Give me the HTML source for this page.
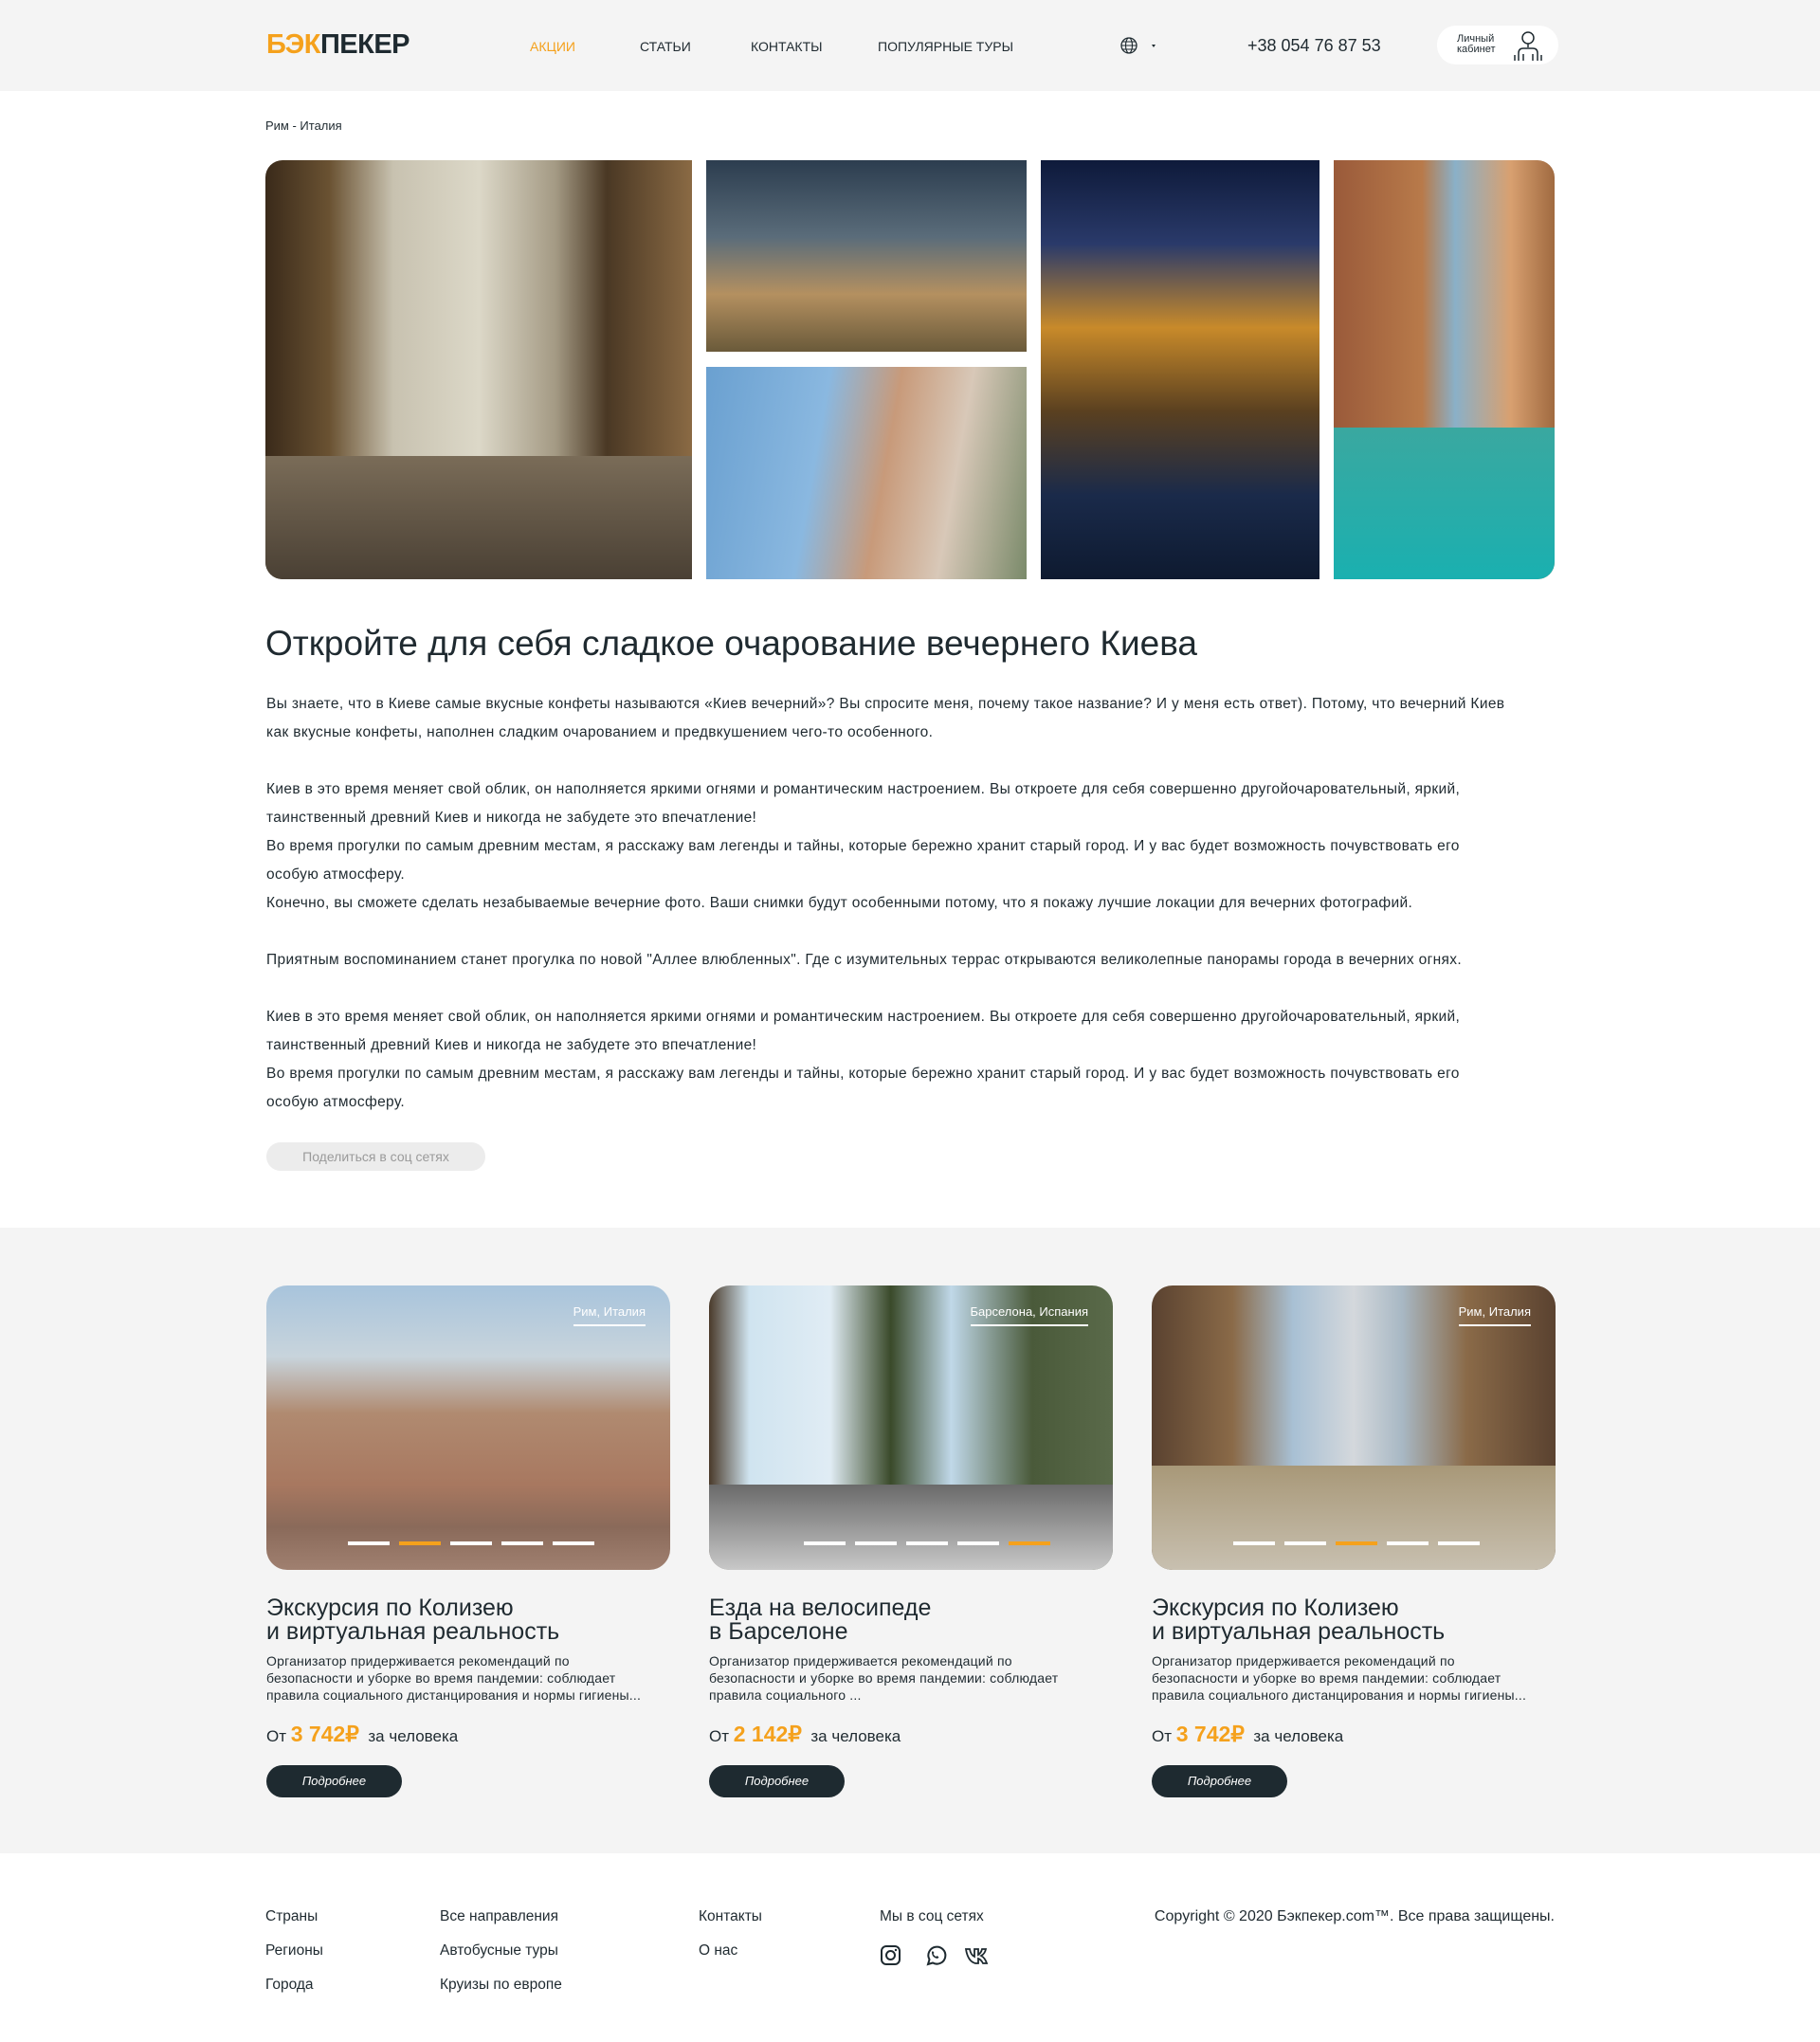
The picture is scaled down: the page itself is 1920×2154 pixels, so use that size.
<!DOCTYPE html>
<html><head><meta charset="utf-8"><style>
*{margin:0;padding:0;box-sizing:border-box}
body{width:1920px;height:2154px;background:#fff;font-family:"Liberation Sans","Noto Sans CJK SC",sans-serif;color:#1f2a30;position:relative;overflow:hidden}
.abs{position:absolute}
header{position:absolute;left:0;top:0;width:1920px;height:96px;background:#f4f4f4}
.logo{left:281px;top:31px;font-weight:bold;font-size:29px;letter-spacing:-0.5px}
.nav{top:41px;font-size:14px;color:#1f2a30}
.img{position:absolute;overflow:hidden}
p.t{font-size:15.5px;line-height:30px;color:#1f2a30;letter-spacing:0.35px}
.gray{position:absolute;left:0;top:1295px;width:1920px;height:660px;background:#f4f4f4}
.card .ph{position:absolute;width:426px;height:300px;border-radius:22px;overflow:hidden}
.tag{position:absolute;color:#fff;font-size:13px;top:20px;right:26px;border-bottom:2px solid #fff;padding-bottom:6px}
.dots{position:absolute;bottom:26px;left:86px;display:flex;gap:10px}
.dots i{display:block;width:44px;height:4px;background:#fff}
.dots i.o{background:#f5a11c}
.ct{position:absolute;font-size:25px;line-height:25px;color:#1f2a30}
.cd{position:absolute;font-size:14px;line-height:18px;width:400px;color:#1f2a30;letter-spacing:0.2px}
.pr{position:absolute;font-size:17px}
.pr b{color:#f5a11c;font-size:23px}
.btn{position:absolute;width:143px;height:34px;border-radius:17px;background:#1e2a30;color:#fff;font-size:13px;font-style:italic;text-align:center;line-height:34px}
.f{position:absolute;font-size:15.5px;color:#1f2a30}
</style></head><body>
<header>
<div class="abs logo"><span style="color:#f5a11c">БЭК</span><span style="color:#1e2a30">ПЕКЕР</span></div>
<div class="abs nav" style="left:559px;color:#f5a11c">АКЦИИ</div>
<div class="abs nav" style="left:675px">СТАТЬИ</div>
<div class="abs nav" style="left:792px">КОНТАКТЫ</div>
<div class="abs nav" style="left:926px">ПОПУЛЯРНЫЕ ТУРЫ</div>
<svg class="abs" style="left:1181px;top:37px" width="40" height="22" viewBox="0 0 40 22"><circle cx="10" cy="11" r="8" fill="none" stroke="#1e2a30" stroke-width="1.3"/><ellipse cx="10" cy="11" rx="3.5" ry="8" fill="none" stroke="#1e2a30" stroke-width="1.1"/><path d="M2 11h16M3.5 7h13M3.5 15h13" stroke="#1e2a30" stroke-width="1"/><path d="M34 10l4 0-2 3z" fill="#1e2a30"/></svg>
<div class="abs" style="left:1316px;top:38px;font-size:18px">+38 054 76 87 53</div>
<div class="abs" style="left:1516px;top:27px;width:128px;height:41px;background:#fff;border-radius:20px"></div>
<div class="abs" style="left:1537px;top:36px;font-size:11px;line-height:11px">Личный<br>кабинет</div>
<svg class="abs" style="left:1596px;top:31px" width="32" height="34" viewBox="0 0 32 34"><circle cx="16" cy="9" r="6" fill="none" stroke="#1e2a30" stroke-width="1.5"/><path d="M16 15v4M6 33V25q0-5 5-5h10q5 0 5 5v8M11 33v-7M21 33v-7M2 33v-6M30 33v-6" fill="none" stroke="#1e2a30" stroke-width="1.5"/></svg>
</header>
<div class="abs" style="left:280px;top:125px;font-size:13px">Рим - Италия</div>
<div class="img" style="left:280px;top:169px;width:450px;height:442px;border-radius:18px 0 0 18px;background:linear-gradient(90deg,#3a2a1a 0%,#6a5232 15%,#c8c2b0 30%,#dcd8c8 50%,#a49a84 68%,#4a3824 80%,#8a6a44 100%)"><div style="position:absolute;left:0;bottom:0;width:100%;height:130px;background:linear-gradient(#7a6c58,#4a4034)"></div></div>
<div class="img" style="left:745px;top:169px;width:338px;height:202px;background:linear-gradient(#2c3d4f 0%,#5a6c7a 40%,#b49060 70%,#6a5a3a 100%)"></div>
<div class="img" style="left:745px;top:387px;width:338px;height:224px;background:linear-gradient(100deg,#6aa0d0 0%,#8ab8e0 35%,#c89a7a 55%,#d8c8b8 75%,#7a8a6a 100%)"></div>
<div class="img" style="left:1098px;top:169px;width:294px;height:442px;background:linear-gradient(#0e1a3a 0%,#2a3a6a 20%,#c88a2a 40%,#5a4020 60%,#1a2a4a 80%,#0e1a30 100%)"></div>
<div class="img" style="left:1407px;top:169px;width:233px;height:442px;border-radius:0 18px 18px 0;background:linear-gradient(90deg,#9a5a3a 0%,#b87a4a 40%,#8ab0c8 55%,#d8a070 80%,#a06a40 100%)"><div style="position:absolute;left:0;bottom:0;width:100%;height:160px;background:linear-gradient(#3aa8a0,#1ab0b0)"></div></div>
<div class="abs" style="left:280px;top:658px;font-size:37px;color:#1f2a30">Откройте для себя сладкое очарование вечернего Киева</div>
<div class="abs" style="left:281px;top:728px;width:1314px">
<p class="t">Вы знаете, что в Киеве самые вкусные конфеты называются «Киев вечерний»? Вы спросите меня, почему такое название? И у меня есть ответ). Потому, что вечерний Киев как вкусные конфеты, наполнен сладким очарованием и предвкушением чего-то особенного.</p>
<p class="t" style="margin-top:30px">Киев в это время меняет свой облик, он наполняется яркими огнями и романтическим настроением. Вы откроете для себя совершенно другойочаровательный, яркий, таинственный древний Киев и никогда не забудете это впечатление!</p>
<p class="t">Во время прогулки по самым древним местам, я расскажу вам легенды и тайны, которые бережно хранит старый город. И у вас будет возможность почувствовать его особую атмосферу.</p>
<p class="t">Конечно, вы сможете сделать незабываемые вечерние фото. Ваши снимки будут особенными потому, что я покажу лучшие локации для вечерних фотографий.</p>
<p class="t" style="margin-top:30px">Приятным воспоминанием станет прогулка по новой "Аллее влюбленных". Где с изумительных террас открываются великолепные панорамы города в вечерних огнях.</p>
<p class="t" style="margin-top:30px">Киев в это время меняет свой облик, он наполняется яркими огнями и романтическим настроением. Вы откроете для себя совершенно другойочаровательный, яркий, таинственный древний Киев и никогда не забудете это впечатление!</p>
<p class="t">Во время прогулки по самым древним местам, я расскажу вам легенды и тайны, которые бережно хранит старый город. И у вас будет возможность почувствовать его особую атмосферу.</p>
</div>
<div class="abs" style="left:281px;top:1205px;width:231px;height:30px;border-radius:15px;background:#ececec;color:#9a9a9a;font-size:14px;text-align:center;line-height:30px">Поделиться в соц сетях</div>
<div class="gray"></div>

<div class="card">
<div class="ph" style="left:281px;top:1356px;background:linear-gradient(#a8c4dc 0%,#c8d4dc 25%,#b08a70 45%,#a87860 70%,#8a6a5a 85%,#a08070 100%)"><div class="tag">Рим, Италия</div><div class="dots"><i></i><i class="o"></i><i></i><i></i><i></i></div></div>
<div class="ct" style="left:281px;top:1684px">Экскурсия по Колизею<br>и виртуальная реальность</div>
<div class="cd" style="left:281px;top:1743px">Организатор придерживается рекомендаций по безопасности и уборке во время пандемии: соблюдает правила социального дистанцирования и нормы гигиены...</div>
<div class="pr" style="left:281px;top:1816px">От <b>3 742₽</b>&nbsp; за человека</div>
<div class="btn" style="left:281px;top:1862px">Подробнее</div>
</div>
<div class="card">
<div class="ph" style="left:748px;top:1356px;background:linear-gradient(90deg,#4a3a2a 0%,#d0e4f0 10%,#e0ecf4 30%,#3a4a2a 45%,#c0d8e8 60%,#4a5a3a 80%,#5a6a4a 100%)"><div style="position:absolute;left:0;bottom:0;width:100%;height:90px;background:linear-gradient(#6a6a6a,#c8c8c8)"></div><div class="tag">Барселона, Испания</div><div class="dots" style="left:100px"><i></i><i></i><i></i><i></i><i class="o"></i></div></div>
<div class="ct" style="left:748px;top:1684px">Езда на велосипеде<br>в Барселоне</div>
<div class="cd" style="left:748px;top:1743px">Организатор придерживается рекомендаций по безопасности и уборке во время пандемии: соблюдает правила социального ...</div>
<div class="pr" style="left:748px;top:1816px">От <b>2 142₽</b>&nbsp; за человека</div>
<div class="btn" style="left:748px;top:1862px">Подробнее</div>
</div>
<div class="card">
<div class="ph" style="left:1215px;top:1356px;background:linear-gradient(90deg,#5a4230 0%,#8a6a48 20%,#a8c0d4 35%,#d4d8dc 50%,#a8b8c4 62%,#8a6a48 78%,#5a4230 100%)"><div style="position:absolute;left:0;bottom:0;width:100%;height:110px;background:linear-gradient(#a89878,#c8c0b0)"></div><div class="tag">Рим, Италия</div><div class="dots"><i></i><i></i><i class="o"></i><i></i><i></i></div></div>
<div class="ct" style="left:1215px;top:1684px">Экскурсия по Колизею<br>и виртуальная реальность</div>
<div class="cd" style="left:1215px;top:1743px">Организатор придерживается рекомендаций по безопасности и уборке во время пандемии: соблюдает правила социального дистанцирования и нормы гигиены...</div>
<div class="pr" style="left:1215px;top:1816px">От <b>3 742₽</b>&nbsp; за человека</div>
<div class="btn" style="left:1215px;top:1862px">Подробнее</div>
</div>

<div class="f" style="left:280px;top:2013px">Страны</div>
<div class="f" style="left:280px;top:2049px">Регионы</div>
<div class="f" style="left:280px;top:2085px">Города</div>
<div class="f" style="left:464px;top:2013px">Все направления</div>
<div class="f" style="left:464px;top:2049px">Автобусные туры</div>
<div class="f" style="left:464px;top:2085px">Круизы по европе</div>
<div class="f" style="left:737px;top:2013px">Контакты</div>
<div class="f" style="left:737px;top:2049px">О нас</div>
<div class="f" style="left:928px;top:2013px">Мы в соц сетях</div>
<div class="f" style="right:280px;top:2013px;font-size:16px">Copyright © 2020 Бэкпекер.com™. Все права защищены.</div>
<svg class="abs" style="left:929px;top:2051px" width="125" height="24" viewBox="0 0 125 24"><rect x="1" y="2" width="19" height="19" rx="5" fill="none" stroke="#1e2a30" stroke-width="2"/><circle cx="10.5" cy="11.5" r="4.5" fill="none" stroke="#1e2a30" stroke-width="2"/><circle cx="16" cy="6" r="1.2" fill="#1e2a30"/><path d="M50 21l1.5-5A9 9 0 1 1 55 19.5z" fill="none" stroke="#1e2a30" stroke-width="2"/><path d="M54 8q0 6 6 7l1.5-1.5-2-1.5-1 1q-2-1-3-3l1-1-1.5-2z" fill="#1e2a30"/><path d="M90 5h4q1 6 5 8V5h4v6q3-2 4-6h4q-1 5-5 7 4 2 6 8h-4q-2-4-5-5v5h-3q-8-2-10-15z" fill="none" stroke="#1e2a30" stroke-width="1.8"/></svg>
</body></html>
